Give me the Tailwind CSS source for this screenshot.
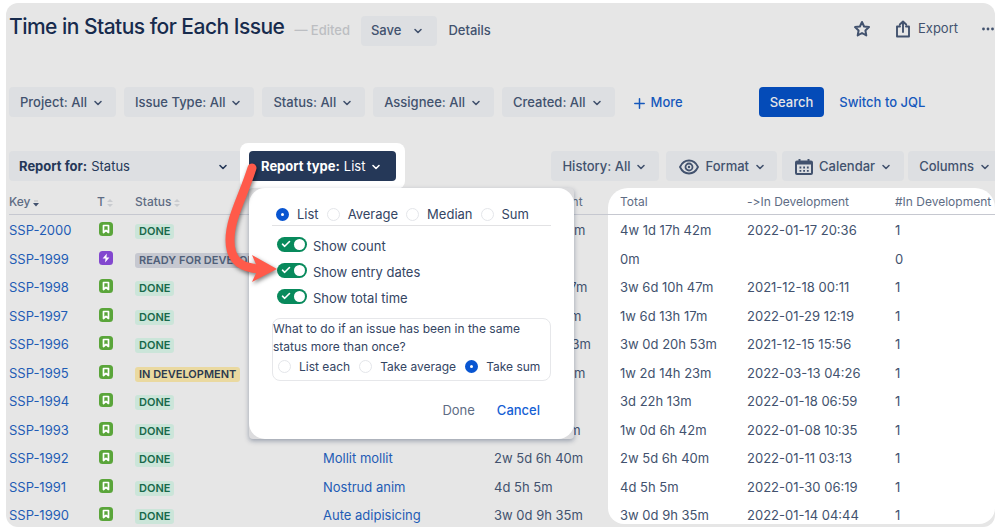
<!DOCTYPE html>
<html lang="en">
<head>
    <meta charset="UTF-8">
    <meta name="viewport" content="width=device-width, initial-scale=1.0">
    <title>Time in Status for Each Issue</title>
    <script src="https://cdn.jsdelivr.net/npm/@tailwindcss/browser@4"></script>
</head>
<body class="bg-white font-['Inter',sans-serif] text-[13px] text-[#42526e]">
    <svg class="hidden">
        <symbol id="chevron" viewBox="0 0 10 10"><path d="M2 3.5 5 6.500 8 3.500" fill="none" stroke="currentColor" stroke-width="1.600" stroke-linecap="round" stroke-linejoin="round"/></symbol>
        <symbol id="sort" viewBox="0 0 6 8"><path d="M0 3 3 0 6 3zM0 5 3 8 6 5z" fill="currentColor"/></symbol>
        <symbol id="check" viewBox="0 0 10 8"><path d="M1.500 4.200 3.700 6.300 8.500 1.500" fill="none" stroke="currentColor" stroke-width="1.600" stroke-linecap="round" stroke-linejoin="round"/></symbol>
        <symbol id="story" viewBox="0 0 14 14"><rect width="14" height="14" rx="3.500" fill="#5aa53a"/><path d="M4.500 3.500h5v7L7 8.300l-2.500 2.200z" fill="none" stroke="#fff" stroke-width="1.700" stroke-linejoin="round"/></symbol>
        <symbol id="epic" viewBox="0 0 14 14"><rect width="14" height="14" rx="3.500" fill="#8247cf"/><path d="M7.800 2.600 3.600 7.600h2.900l-.4 3.800 4.300-5H7.500z" fill="#fff"/></symbol>
    </svg>

    <div class="relative ml-[6px] mr-[3px] mt-[3px] overflow-hidden rounded-xl bg-[#e6e6e6] pl-[3px]">
        <!-- Header -->
        <header class="flex h-[55px] items-center">
            <h1 class="-mt-2 text-[21px] font-medium tracking-tight text-[#172b4d]">Time in Status for Each Issue</h1>
            <span class="ml-[10px] font-medium text-[#bcbec2]">— Edited</span>
            <button class="ml-[11px] flex h-[30px] items-center rounded-sm bg-[#dddfe2] px-[10px] font-medium">Save <svg class="ml-3 mr-1 size-[10px]"><use href="#chevron"/></svg></button>
            <a href="#" class="ml-[11px] font-medium">Details</a>
            <div class="-mt-1 ml-auto flex items-center pr-px">
                <button aria-label="Add to favourites"><svg class="size-[18px]" viewBox="0 0 18 18" fill="none" stroke="currentColor" stroke-width="2" stroke-linejoin="round"><path d="m9 2 2.100 4.500 4.900.6-3.600 3.400.9 4.900L9 13l-4.300 2.400.9-4.900L2 7.100l4.900-.6z"/></svg></button>
                <button class="ml-6 flex items-center gap-[7px]"><svg class="h-[18px] w-4" viewBox="0 0 16 18" fill="none" stroke="currentColor" stroke-width="1.900" stroke-linecap="round" stroke-linejoin="round"><path d="M5 6.500H2v10h12v-10h-3M8 12V1.500M4.800 4.500 8 1.500l3.200 3"/></svg>Export</button>
                <button class="ml-6" aria-label="More actions"><svg class="h-1 w-3" viewBox="0 0 12 4" fill="currentColor"><circle cx="1.500" cy="2" r="1.400"/><circle cx="6" cy="2" r="1.400"/><circle cx="10.500" cy="2" r="1.400"/></svg></button>
            </div>
        </header>

        <!-- Filters -->
        <div class="mt-[29px] flex items-center gap-2 font-medium">
            <button class="flex h-[30px] items-center gap-[6px] rounded-sm bg-[#dddfe2] pl-[11px] pr-[13px] pt-0.5">Project: All <svg class="size-[10px]"><use href="#chevron"/></svg></button>
            <button class="flex h-[30px] items-center gap-[6px] rounded-sm bg-[#dddfe2] pl-[11px] pr-[13px] pt-0.5">Issue Type: All <svg class="size-[10px]"><use href="#chevron"/></svg></button>
            <button class="flex h-[30px] items-center gap-[6px] rounded-sm bg-[#dddfe2] pl-[11px] pr-[13px] pt-0.5">Status: All <svg class="size-[10px]"><use href="#chevron"/></svg></button>
            <button class="flex h-[30px] items-center gap-[6px] rounded-sm bg-[#dddfe2] pl-[11px] pr-[13px] pt-0.5">Assignee: All <svg class="size-[10px]"><use href="#chevron"/></svg></button>
            <button class="flex h-[30px] items-center gap-[6px] rounded-sm bg-[#dddfe2] pl-[11px] pr-[13px] pt-0.5">Created: All <svg class="size-[10px]"><use href="#chevron"/></svg></button>
            <button class="ml-[11px] flex items-center gap-[6px] pt-0.5 text-[#1558bc]"><svg class="size-[11px]" viewBox="0 0 11 11" stroke="currentColor" stroke-width="1.500" stroke-linecap="round"><path d="M5.500.8v9.400M.8 5.500h9.400"/></svg>More</button>
            <button class="ml-[68px] h-[30px] rounded-sm bg-[#044bb8] px-[11px] pt-0.5 text-[#e6e6e6]">Search</button>
            <a href="#" class="ml-[7px] pt-0.5 text-[#1558bc]">Switch to JQL</a>
        </div>

        <!-- Report bar -->
        <div class="mt-[26px] flex h-[45px] items-center font-medium">
            <label class="relative flex h-[30px] w-[231px] items-center rounded-l-sm bg-[#dddfe2] pl-[10px] pt-0.5 font-normal text-[#253858]"><span class="font-bold">Report for:</span>
                <select class="ml-1 h-full grow appearance-none outline-none"><option>Status</option></select>
                <svg class="pointer-events-none absolute right-3 size-[10px]"><use href="#chevron"/></svg>
            </label>
            <div class="rounded-lg bg-white px-[9px] py-2">
                <button class="flex h-[30px] w-[147px] items-center rounded-sm bg-[#253858] pl-3 pt-0.5 font-normal text-white"><span class="mr-1 font-bold">Report type:</span>List <svg class="ml-[6px] size-[10px]"><use href="#chevron"/></svg></button>
            </div>
            <div class="-mr-2 ml-auto flex">
                <button class="mr-[7px] flex h-[30px] items-center gap-[6px] rounded-sm bg-[#dddfe2] pl-[11px] pr-[13px] pt-0.5">History: All <svg class="size-[10px]"><use href="#chevron"/></svg></button>
                <button class="mr-[5px] flex h-[30px] items-center gap-[6px] rounded-sm bg-[#dddfe2] pl-[13px] pr-3 pt-0.5"><svg class="h-4 w-5" viewBox="0 0 20 16" fill="none" stroke="currentColor" stroke-width="1.800"><path d="M1 8c2-4.300 5.200-6.500 9-6.500S17 3.700 19 8c-2 4.300-5.200 6.500-9 6.500S3 12.300 1 8z"/><circle cx="10" cy="8" r="3.500"/><circle cx="10" cy="8" r="1.200" fill="currentColor" stroke="none"/></svg>Format <svg class="size-[10px]"><use href="#chevron"/></svg></button>
                <button class="mr-1 flex h-[30px] items-center gap-[6px] rounded-sm bg-[#dddfe2] px-[13px] pt-0.5"><svg class="h-4 w-[18px]" viewBox="0 0 18 16" fill="none" stroke="currentColor" stroke-width="2"><rect x="1" y="2.500" width="16" height="12.500" rx="1"/><path d="M1 3.800h16" stroke-width="3.600"/><path d="M4.500 0v3M13.500 0v3"/><path d="M4.500 8.500h9.500M4.500 11.800h9.500" stroke-width="1.800" stroke-dasharray="1.800 1.900"/></svg>Calendar <svg class="size-[10px]"><use href="#chevron"/></svg></button>
                <button class="flex h-[30px] items-center gap-[6px] rounded-sm bg-[#dddfe2] pl-[11px] pr-[13px] pt-0.5">Columns <svg class="size-[10px]"><use href="#chevron"/></svg></button>
            </div>
        </div>

        <!-- Issues -->
        <table class="w-full table-fixed border-separate border-spacing-0 text-left text-[13px] leading-4 text-[#42526e]">
            <colgroup><col class="w-[88px]"><col class="w-[38px]"><col class="w-[188px]"><col class="w-[171px]"><col class="w-[114px]"><col class="w-[127px]"><col class="w-[148px]"><col></colgroup>
            <thead class="text-xs text-[#5e6c84]">
                <tr class="h-[27px] *:whitespace-nowrap *:border-b *:border-[#c6c8d0] *:pt-0.5">
                    <th class="font-medium">Key <svg class="-ml-px inline h-2 w-[6px] text-[#42526e]" viewBox="0 0 6 8"><path d="M0 4h6L3 7.500z" fill="currentColor"/><path d="M1 2h4" stroke="#bbb"/></svg></th>
                    <th class="font-medium">T <svg class="-ml-px inline h-2 w-[6px] text-[#c9cbcf]"><use href="#sort"/></svg></th>
                    <th class="font-medium">Status <svg class="-ml-px inline h-2 w-[6px] text-[#c9cbcf]"><use href="#sort"/></svg></th>
                    <th></th>
                    <th class="font-normal">In Development</th>
                    <th class="rounded-tl-[20px] bg-white pl-3 font-normal">Total</th>
                    <th class="bg-white pl-3 font-normal [font-variant-ligatures:no-contextual]">-&gt;In Development</th>
                    <th class="rounded-tr-[20px] bg-white pl-3 font-normal">#In Development</th>
                </tr>
            </thead>
            <tbody id="issues"></tbody>
        </table>
        <div class="h-[3px]"></div>

        <!-- Report type menu -->
        <form class="absolute left-[243px] top-[185px] w-[325px] rounded-sm bg-[#dcdcde] shadow-[0_2px_5px_rgba(9,30,66,0.35)]">
            <div class="rounded-2xl bg-white px-[23px] pb-[18px] pt-4 text-[#344563]">
                <div class="flex h-[22px] items-center border-b border-[#e2e2e4] pl-1">
                    <label class="flex items-center gap-2"><input type="radio" name="type" checked class="size-[13px] appearance-none rounded-full border border-[#e4e6ea] checked:border-[5px] checked:border-[#0855d1]">List</label>
                    <label class="ml-2 flex items-center gap-2"><input type="radio" name="type" class="size-[13px] appearance-none rounded-full border border-[#e4e6ea] checked:border-[5px] checked:border-[#0855d1]">Average</label>
                    <label class="ml-2 flex items-center gap-2"><input type="radio" name="type" class="size-[13px] appearance-none rounded-full border border-[#e4e6ea] checked:border-[5px] checked:border-[#0855d1]">Median</label>
                    <label class="ml-2 flex items-center gap-2"><input type="radio" name="type" class="size-[13px] appearance-none rounded-full border border-[#e4e6ea] checked:border-[5px] checked:border-[#0855d1]">Sum</label>
                </div>
                <div id="toggles" class="mt-2"></div>
                <fieldset class="mt-[6px] rounded-lg border border-[#e6e7ea] pb-[3px] text-xs">
                    <p class="pt-px leading-[18px]">What to do if an issue has been in the same status more than once?</p>
                    <div class="flex h-[21px] items-center gap-[9px] whitespace-nowrap pl-[5px]">
                        <label class="flex items-center gap-2"><input type="radio" name="repeat" class="size-[13px] appearance-none rounded-full border border-[#e4e6ea] checked:border-[5px] checked:border-[#0855d1]">List each</label>
                        <label class="flex items-center gap-2"><input type="radio" name="repeat" class="size-[13px] appearance-none rounded-full border border-[#e4e6ea] checked:border-[5px] checked:border-[#0855d1]">Take average</label>
                        <label class="flex items-center gap-2"><input type="radio" name="repeat" checked class="size-[13px] appearance-none rounded-full border border-[#e4e6ea] checked:border-[5px] checked:border-[#0855d1]">Take sum</label>
                    </div>
                </fieldset>
                <div class="mt-5 flex justify-end gap-[22px] pr-[11px]">
                    <button type="button" class="text-[#5e6c84]">Done</button>
                    <button type="button" class="font-medium text-[#1560d4]">Cancel</button>
                </div>
            </div>
        </form>

        <!-- Callout arrow -->
        <svg class="pointer-events-none absolute left-[214px] top-[157px] h-[130px] w-[60px] drop-shadow-[1px_2px_2px_rgba(0,0,0,0.5)]" viewBox="0 0 60 130">
            <path d="M32 8C23 37 10 58 10 80c0 19 9 28 30 29" fill="none" stroke="#ff5a4a" stroke-width="9" stroke-linecap="round"/>
            <path d="M32 95 57 109 32 122 38 109z" fill="#ff5a4a"/>
        </svg>
    </div>

    <script>
        const issues = [
            ['SSP-2000', 'DONE', '', '4w 1d 17h 42m', '2022-01-17 20:36', 1],
            ['SSP-1999', 'READY FOR DEVELOPMENT', '', '0m', '', 0],
            ['SSP-1998', 'DONE', '', '3w 6d 10h 47m', '2021-12-18 00:11', 1],
            ['SSP-1997', 'DONE', '', '1w 6d 13h 17m', '2022-01-29 12:19', 1],
            ['SSP-1996', 'DONE', '', '3w 0d 20h 53m', '2021-12-15 15:56', 1],
            ['SSP-1995', 'IN DEVELOPMENT', '', '1w 2d 14h 23m', '2022-03-13 04:26', 1],
            ['SSP-1994', 'DONE', '', '3d 22h 13m', '2022-01-18 06:59', 1],
            ['SSP-1993', 'DONE', '', '1w 0d 6h 42m', '2022-01-08 10:35', 1],
            ['SSP-1992', 'DONE', 'Mollit mollit', '2w 5d 6h 40m', '2022-01-11 03:13', 1],
            ['SSP-1991', 'DONE', 'Nostrud anim', '4d 5h 5m', '2022-01-30 06:19', 1],
            ['SSP-1990', 'DONE', 'Aute adipisicing', '3w 0d 9h 35m', '2022-01-14 04:44', 1]
        ];

        const badgeColors = {
            'DONE': 'bg-[#cbe5d9] text-[#18694a]',
            'READY FOR DEVELOPMENT': 'bg-[#c6c8d0] text-[#505f79]',
            'IN DEVELOPMENT': 'bg-[#ead9a0] text-[#2c3a4f]'
        };

        document.getElementById('issues').innerHTML = issues.map(([key, status, summary, time, entered, count]) => `
            <tr class="h-[29px] even:h-7 last:h-[23px] *:whitespace-nowrap *:pt-[7px] *:align-top">
                <td><a href="#" class="text-[#1f5cb5]">${key}</a></td>
                <td><svg class="ml-0.5 size-[14px]"><use href="${count ? '#story' : '#epic'}"/></svg></td>
                <td><span class="mt-px inline-block rounded-[3px] px-1 text-[11px] font-semibold leading-[15px] ${badgeColors[status]}">${status}</span></td>
                <td>${summary ? `<a href="#" class="text-[#1f5cb5]">${summary}</a>` : ''}</td>
                <td>${time}</td>
                <td class="bg-white pl-3 ${key === 'SSP-1990' ? 'rounded-bl-2xl' : ''}">${time}</td>
                <td class="bg-white pl-3">${entered}</td>
                <td class="bg-white pl-3 ${key === 'SSP-1990' ? 'rounded-br-2xl' : ''}">${count}</td>
            </tr>
        `).join('');

        document.getElementById('toggles').innerHTML = ['Show count', 'Show entry dates', 'Show total time'].map(name => `
            <label class="flex h-[26px] items-center pl-[5px]">
                <span class="relative mb-[6px] mr-[6px] flex">
                    <input type="checkbox" checked class="peer h-[15px] w-[30px] appearance-none rounded-full bg-[#6b778c] checked:bg-[#088a5c]">
                    <span class="absolute left-[2px] top-[2px] size-[11px] rounded-full bg-white peer-checked:left-[17px]"></span>
                    <svg class="absolute left-1 top-[3px] h-2 w-[10px] text-white"><use href="#check"/></svg>
                </span>${name}
            </label>
        `).join('');
    </script>
</body>
</html>
